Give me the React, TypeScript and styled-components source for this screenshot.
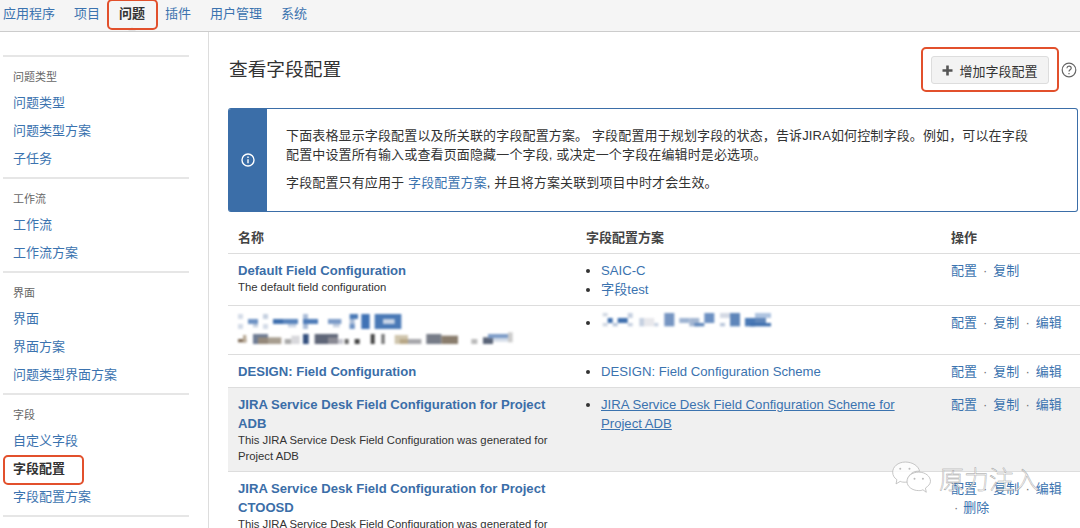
import React from "react";
import styled, { createGlobalStyle } from "styled-components";

const Global = createGlobalStyle`
  html, body { margin: 0; padding: 0; background: #fff; }
  body { font-family: "Liberation Sans", "Noto Sans CJK SC", sans-serif; color: #333; }
  #root { width: 1080px; height: 528px; overflow: hidden; position: relative; }
`;

const Page = styled.div`
  width: 1080px; height: 528px; overflow: hidden; position: relative; display: flex; flex-direction: column;
`;
const TopNav = styled.nav`
  height: 31px; flex: none; display: flex; align-items: flex-start; background: #f5f5f5; border-bottom: 1px solid #ccc; padding-left: 3px;
`;
const NavItem = styled.span<{ $w: number; $active?: boolean }>`
  position: relative; width: ${p => p.$w}px; flex: none; font-size: 13px; line-height: 27px; color: ${p => (p.$active ? "#333" : "#3b73af")}; font-weight: ${p => (p.$active ? 700 : 400)};
`;
const Caret = styled.i`
  position: absolute; left: 9px; top: 27px; border: 4px solid transparent; border-top: 0; border-bottom: 4px solid #e4e4e4;
`;
const NavMark = styled.span`
  position: absolute; left: -12px; top: -1px; width: 51px; height: 31px; border: 2px solid #e2502c; border-radius: 5px; box-sizing: border-box;
`;
const Body = styled.div`flex: 1; display: flex; min-height: 0;`;
const Sidebar = styled.aside`
  width: 209px; flex: none; box-sizing: border-box; border-right: 1px solid #ddd; padding: 23px 19px 0 3px;
`;
const SideGroup = styled.section`
  border-top: 2px solid #e6e6e6; padding: 10px 0 4px 10px;
`;
const SideHead = styled.h3`
  margin: 0 0 2px; font-size: 11px; line-height: 20px; height: 20px; font-weight: 400; color: #666;
`;
const SideLink = styled.div<{ $active?: boolean }>`
  position: relative; font-size: 13px; line-height: 28px; height: 28px; color: ${p => (p.$active ? "#333" : "#3b73af")}; font-weight: ${p => (p.$active ? 700 : 400)};
`;
const SideMark = styled.span`
  position: absolute; left: -10px; top: 0; width: 81px; height: 30px; border: 2px solid #e2502c; border-radius: 5px; box-sizing: border-box;
`;
const Main = styled.main`flex: 1; padding: 0 0 0 19px; min-width: 0;`;
const Header = styled.header`
  height: 76px; display: flex; align-items: flex-start; justify-content: space-between; padding-right: 3px;
`;
const Title = styled.h1`
  margin: 24px 0 0 1px; font-size: 18.7px; line-height: 28px; font-weight: 400; color: #333;
`;
const Actions = styled.div`display: flex; align-items: center; margin-top: 24px; gap: 12px;`;
const AddButton = styled.button`
  position: relative; width: 118px; height: 28px; padding: 0; border: 1px solid #ddd; border-radius: 3px; background: #f3f3f3; color: #333; font: 13px "Liberation Sans", "Noto Sans CJK SC", sans-serif; display: flex; align-items: center; justify-content: center; gap: 6px;
`;
const ButtonMark = styled.span`
  position: absolute; left: -11px; top: -10px; width: 138px; height: 45px; border: 2px solid #e2502c; border-radius: 5px; box-sizing: border-box;
`;
const Notice = styled.section`
  display: flex; width: 850px; height: 104px; border: 1px solid #3b6ea8; border-left: 0; border-radius: 3px; box-sizing: border-box; overflow: hidden;
`;
const NoticeIcon = styled.div`
  width: 39px; flex: none; background: #3b6ea8; display: flex; align-items: center; justify-content: center;
`;
const NoticeBody = styled.div`
  padding: 18px 0 0 19px; font-size: 13px; line-height: 18.5px; color: #333; letter-spacing: .14px;
  p { margin: 0 0 9.5px; }
`;
const A = styled.a`color: #3b73af;`;
const UA = styled(A)`text-decoration: underline;`;
const Table = styled.table`
  width: 852px; border-collapse: collapse; table-layout: fixed; font-size: 13.15px; line-height: 19px;
`;
const Th = styled.th<{ $w: number }>`
  width: ${p => p.$w}px; box-sizing: border-box; text-align: left; font-weight: 700; font-size: 13px; color: #444; padding: 16px 10px 5px; line-height: 20px; border-bottom: 1px solid #ddd;
`;
const Row = styled.tr<{ $h: number; $shade?: boolean }>`
  height: ${p => p.$h}px; background: ${p => (p.$shade ? "#f0f0f0" : "#fff")};
  & > td { border-bottom: 1px solid #ddd; vertical-align: top; padding: 7px 10px 0; }
`;
const Name = styled.div`font-weight: 700; color: #3b6ea8; font-size: 13.1px; line-height: 19px;`;
const Desc = styled.div`font-size: 11.3px; line-height: 16px; color: #333; margin-top: -1px;`;
const Bullets = styled.ul`
  margin: 0; padding: 0 0 0 15px; color: #333; line-height: 19px;
`;
const Ops = styled.div`color: #3b73af; font-size: 13px;`;
const Dot = styled.span`color: #777; margin: 0 6px;`;
const LeadDot = styled(Dot)`margin: 0 5px 0 3px;`;
const Water = styled.div`
  position: absolute; left: 891px; top: 458px; display: flex; align-items: center; gap: 6px; pointer-events: none;
`;
const WaterText = styled.span`
  font-size: 25px; line-height: 40px; color: rgba(255,255,255,.85); -webkit-text-stroke: .4px #999; font-family: "Noto Sans CJK SC", sans-serif; font-weight: 300;
`;
const MosaicSvg = styled.svg`
  display: block; filter: blur(.8px);
`;
const MosaicName = styled(MosaicSvg)`margin-top: 1px;`;

type Cell = [number, number, number, number, string];

/* Pixelated redaction blocks, in a 3x coordinate space */
const nameCells: Cell[] = [
  [60,45,15,15,"#d5dce8"],[60,75,15,15,"#d5dce8"],[90,60,30,15,"#6f93c4"],[105,75,15,10,"#c5d0e0"],[135,45,15,15,"#c5d0e0"],[135,75,15,15,"#d5dce8"],
  [165,60,30,15,"#3f6fae"],[195,60,45,15,"#5a85bd"],[210,75,25,10,"#c9d4e4"],[255,45,15,45,"#a9bcd8"],[255,60,45,15,"#4f7cb8"],[330,60,40,15,"#7d9cc8"],[345,75,20,10,"#c5d0e0"],
  [395,45,25,15,"#4a79b6"],[395,60,15,30,"#a9bcd8"],[395,75,15,15,"#6f93c4"],[430,45,25,45,"#3f72b5"],[470,45,80,45,"#4a79b6"],[495,60,35,15,"#c8d4e6"],
  [60,120,25,10,"#7e6a55"],[75,108,10,22,"#b9aa96"],[105,105,45,30,"#6f7c94"],[120,115,30,20,"#94887a"],[150,115,40,20,"#a89e90"],[200,120,20,15,"#aaa"],[220,110,25,25,"#d8d8dc"],
  [255,105,17,30,"#34507f"],[290,105,70,30,"#5f6678"],[330,115,30,20,"#8a8a94"],[360,120,15,15,"#c8c8d0"],[380,120,12,15,"#666"],[410,120,15,15,"#444"],[458,105,12,30,"#444"],[490,105,10,30,"#777"],
  [530,108,40,27,"#d0c6ae"],[545,120,25,15,"#b8a888"],[570,120,40,15,"#a8a8ac"],[625,105,45,30,"#777c88"],[670,110,50,25,"#8a7d6d"],[760,120,18,15,"#bbb"],[795,115,30,20,"#5a6478"],
  [810,105,60,13,"#7d9cc8"],[825,118,45,10,"#d2dbe8"],[870,100,14,30,"#ccc"],
];
const schemeCells: Cell[] = [
  [95,45,15,10,"#d0d7e2"],[110,60,15,15,"#3f6fae"],[140,60,30,15,"#3f6fae"],[170,45,15,15,"#c5d0e0"],[95,75,15,10,"#d0d7e2"],[125,75,15,10,"#b8c6da"],[170,75,15,10,"#c5d0e0"],
  [205,60,15,25,"#c5d0e0"],[220,60,30,25,"#e8e8ec"],[250,75,12,10,"#c5d0e0"],[280,45,30,40,"#7695c2"],[325,60,30,15,"#9db3d2"],[355,60,30,25,"#a3b6d2"],[370,75,30,10,"#5f86ba"],[400,45,30,30,"#6c90c2"],
  [447,45,30,15,"#d4d9e4"],[447,75,15,10,"#b8c6da"],[477,45,30,40,"#5f86ba"],[522,60,30,25,"#4a79b6"],[552,45,48,15,"#aec3e0"],[537,75,63,10,"#3f6fae"],[552,60,33,15,"#5f86ba"],
];

const Op = ({ items }: { items: string[] }) => (
  <Ops>
    {items.map((t, i) => <React.Fragment key={t}>{i > 0 && <Dot>·</Dot>}{t}</React.Fragment>)}
  </Ops>
);

const Rects = ({ cells }: { cells: Cell[] }) => (
  <>{cells.map((c, i) => <rect key={i} x={c[0]} y={c[1]} width={c[2]} height={c[3]} fill={c[4]} />)}</>
);

const groups = [
  { head: "问题类型", links: ["问题类型", "问题类型方案", "子任务"] },
  { head: "工作流", links: ["工作流", "工作流方案"] },
  { head: "界面", links: ["界面", "界面方案", "问题类型界面方案"] },
  { head: "字段", links: ["自定义字段", "字段配置", "字段配置方案"] },
];

export default function App() {
  return (
    <Page>
      <Global />
      <TopNav>
        <NavItem $w={71}>应用程序</NavItem>
        <NavItem $w={45}>项目</NavItem>
        <NavItem $w={46} $active>问题<Caret /><NavMark /></NavItem>
        <NavItem $w={45}>插件</NavItem>
        <NavItem $w={71}>用户管理</NavItem>
        <NavItem $w={40}>系统</NavItem>
      </TopNav>
      <Body>
        <Sidebar>
          {groups.map(g => (
            <SideGroup key={g.head}>
              <SideHead>{g.head}</SideHead>
              {g.links.map(l => (
                <SideLink key={l} $active={l === "字段配置"}>
                  {l}{l === "字段配置" && <SideMark />}
                </SideLink>
              ))}
            </SideGroup>
          ))}
          <SideGroup />
        </Sidebar>
        <Main>
          <Header>
            <Title>查看字段配置</Title>
            <Actions>
              <AddButton>
                <svg width="11" height="11" viewBox="0 0 11 11"><path d="M4.2 0.5h2.6v3.7h3.7v2.6H6.8v3.7H4.2V6.8H.5V4.2h3.7z" fill="#555" /></svg>
                增加字段配置
                <ButtonMark />
              </AddButton>
              <svg width="16" height="16" viewBox="0 0 16 16" fill="none" stroke="#666" strokeWidth="1.2">
                <circle cx="8" cy="8" r="6.8" />
                <path d="M5.9 6.2c.2-2.7 4.3-2.6 4.3 0 0 1.6-2.2 1.7-2.2 3.4" />
                <path d="M8 11v1.3" />
              </svg>
            </Actions>
          </Header>
          <Notice>
            <NoticeIcon>
              <svg width="14" height="14" viewBox="0 0 14 14" fill="none" stroke="#fff" strokeWidth="1.4">
                <circle cx="7" cy="7" r="6" />
                <path d="M7 6.2v4M7 3.6v1.3" />
              </svg>
            </NoticeIcon>
            <NoticeBody>
              <p>下面表格显示字段配置以及所关联的字段配置方案。 字段配置用于规划字段的状态，告诉JIRA如何控制字段。例如，可以在字段<br />配置中设置所有输入或查看页面隐藏一个字段, 或决定一个字段在编辑时是必选项。</p>
              <p>字段配置只有应用于 <A>字段配置方案</A>, 并且将方案关联到项目中时才会生效。</p>
            </NoticeBody>
          </Notice>
          <Table>
            <thead>
              <tr><Th $w={348}>名称</Th><Th $w={365}>字段配置方案</Th><Th $w={139}>操作</Th></tr>
            </thead>
            <tbody>
              <Row $h={52}>
                <td><Name>Default Field Configuration</Name><Desc>The default field configuration</Desc></td>
                <td><Bullets><li><A>SAIC-C</A></li><li><A>字段test</A></li></Bullets></td>
                <td><Op items={["配置", "复制"]} /></td>
              </Row>
              <Row $h={49}>
                <td><MosaicName width="280" height="33" viewBox="60 45 840 99"><Rects cells={nameCells} /></MosaicName></td>
                <td><Bullets><li><MosaicSvg width="170" height="14" viewBox="90 45 510 42"><Rects cells={schemeCells} /></MosaicSvg></li></Bullets></td>
                <td><Op items={["配置", "复制", "编辑"]} /></td>
              </Row>
              <Row $h={33}>
                <td><Name>DESIGN: Field Configuration</Name></td>
                <td><Bullets><li><A>DESIGN: Field Configuration Scheme</A></li></Bullets></td>
                <td><Op items={["配置", "复制", "编辑"]} /></td>
              </Row>
              <Row $h={84} $shade>
                <td><Name>JIRA Service Desk Field Configuration for Project ADB</Name><Desc>This JIRA Service Desk Field Configuration was generated for Project ADB</Desc></td>
                <td><Bullets><li><UA>JIRA Service Desk Field Configuration Scheme for Project ADB</UA></li></Bullets></td>
                <td><Op items={["配置", "复制", "编辑"]} /></td>
              </Row>
              <Row $h={84}>
                <td><Name>JIRA Service Desk Field Configuration for Project CTOOSD</Name><Desc>This JIRA Service Desk Field Configuration was generated for</Desc></td>
                <td />
                <td><Op items={["配置", "复制", "编辑"]} /><Ops><LeadDot>·</LeadDot>删除</Ops></td>
              </Row>
            </tbody>
          </Table>
        </Main>
      </Body>
      <Water>
        <svg width="42" height="38" viewBox="0 0 50 44" fill="rgba(255,255,255,.8)" stroke="#bbb" strokeWidth="1">
          <path d="M17 3C8 3 2 9 2 15c0 4 2 7 5 9l-1 5 5-3c2 1 4 1 6 1 1 0 2 0 3-.2C19 18 27 13 34 14 33 8 26 3 17 3z" />
          <path d="M33 15c-8 0-14 5-14 11s6 11 14 11c2 0 3 0 5-1l4 3-1-5c3-2 6-5 6-8 0-6-6-11-14-11z" />
          <circle cx="11" cy="11" r="1.2" fill="#bbb" stroke="none" /><circle cx="22" cy="11" r="1.2" fill="#bbb" stroke="none" />
          <circle cx="28" cy="23" r="1.2" fill="#bbb" stroke="none" /><circle cx="38" cy="23" r="1.2" fill="#bbb" stroke="none" />
        </svg>
        <WaterText>原力注入</WaterText>
      </Water>
    </Page>
  );
}
